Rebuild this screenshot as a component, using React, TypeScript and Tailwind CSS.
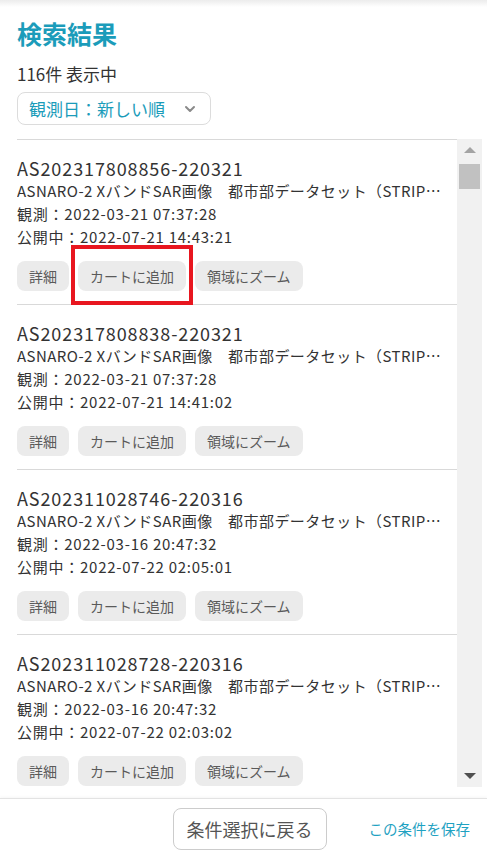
import React from 'react'
import { ChevronDown } from 'lucide-react'

type Scene = {
  id: string
  product: string
  observedAt: string
  publishedAt: string
}

const scenes: Scene[] = [
  {
    id: 'AS202317808856-220321',
    product: 'ASNARO-2 XバンドSAR画像　都市部データセット（STRIPMAP）',
    observedAt: '2022-03-21 07:37:28',
    publishedAt: '2022-07-21 14:43:21',
  },
  {
    id: 'AS202317808838-220321',
    product: 'ASNARO-2 XバンドSAR画像　都市部データセット（STRIPMAP）',
    observedAt: '2022-03-21 07:37:28',
    publishedAt: '2022-07-21 14:41:02',
  },
  {
    id: 'AS202311028746-220316',
    product: 'ASNARO-2 XバンドSAR画像　都市部データセット（STRIPMAP）',
    observedAt: '2022-03-16 20:47:32',
    publishedAt: '2022-07-22 02:05:01',
  },
  {
    id: 'AS202311028728-220316',
    product: 'ASNARO-2 XバンドSAR画像　都市部データセット（STRIPMAP）',
    observedAt: '2022-03-16 20:47:32',
    publishedAt: '2022-07-22 02:03:02',
  },
]

const FONT = { fontFamily: '"Noto Sans CJK JP", "Noto Sans", sans-serif' }

function ChipButton({ children, marked }: { children: React.ReactNode; marked?: boolean }) {
  return (
    <div className="relative">
      <button
        type="button"
        className="h-[30px] px-3 rounded-lg bg-[#ebebeb] text-[14px] text-[#5a5a5a] leading-none"
      >
        {children}
      </button>
      {marked ? (
        <div className="absolute -left-[7px] -right-[7px] -top-[16px] -bottom-[14px] border-[4px] border-[#e8161f] pointer-events-none" />
      ) : null}
    </div>
  )
}

function SceneRow({ scene, first }: { scene: Scene; first: boolean }) {
  return (
    <div className="border-b border-[#d9d9d9] pt-[16px] pb-[13px] pr-[8px]">
      <div className="text-[18px] leading-[24px] tracking-[0.05em] text-[#333]">{scene.id}</div>
      <div className="text-[15px] leading-[22px] tracking-[0.03em] text-[#333] truncate">{scene.product}</div>
      <div className="text-[15px] leading-[23px] tracking-[0.05em] text-[#333]">観測：{scene.observedAt}</div>
      <div className="text-[15px] leading-[23px] tracking-[0.05em] text-[#333]">公開中：{scene.publishedAt}</div>
      <div className="mt-[13px] flex gap-[9px]">
        <ChipButton>詳細</ChipButton>
        <ChipButton marked={first}>カートに追加</ChipButton>
        <ChipButton>領域にズーム</ChipButton>
      </div>
    </div>
  )
}

function ScrollTrack() {
  return (
    <div className="w-[25px] mb-[11px] bg-[#f1f1f1] flex flex-col items-center">
      <div className="h-[22px] flex items-center justify-center">
        <div className="w-0 h-0 border-x-[6px] border-x-transparent border-b-[6px] border-b-[#a3a3a3]" />
      </div>
      <div className="w-[21px] h-[25px] bg-[#c1c1c1] mt-[3px]" />
      <div className="flex-1" />
      <div className="h-[22px] flex items-center justify-center">
        <div className="w-0 h-0 border-x-[6px] border-x-transparent border-t-[6px] border-t-[#505050]" />
      </div>
    </div>
  )
}

export default function App() {
  return (
    <div className="w-[487px] h-[852px] bg-white flex flex-col overflow-hidden" style={FONT}>
      <div className="h-[7px] shrink-0 bg-gradient-to-b from-[#ececec] to-white" />

      <div className="px-[17px] pt-[10px] shrink-0">
        <div className="text-[25px] leading-[32px] font-bold text-[#1b9cba]">検索結果</div>
        <div className="mt-[13px] text-[17px] leading-[24px] text-[#333]">116件 表示中</div>
        <button
          type="button"
          className="mt-[6px] w-[194px] h-[33px] rounded-lg border border-[#dcdcdc] flex items-center justify-between pl-[11px] pr-[12px]"
        >
          <span className="text-[17px] text-[#1b9cba]">観測日：新しい順</span>
          <ChevronDown className="w-[16px] h-[16px] text-[#8a8a8a]" strokeWidth={3} />
        </button>
      </div>

      <div className="mt-[14px] flex-1 min-h-0 flex pr-[5px]">
        <div className="flex-1 min-w-0 ml-[17px] border-t border-[#d9d9d9] overflow-hidden">
          {scenes.map((s, i) => (
            <SceneRow key={s.id} scene={s} first={i === 0} />
          ))}
        </div>
        <ScrollTrack />
      </div>

      <div className="h-[54px] shrink-0 border-t border-[#e3e3e3] shadow-[0_-1px_3px_rgba(0,0,0,0.04)] flex items-start justify-end pr-[17px] pt-[9px] gap-[42px]">
        <button
          type="button"
          className="h-[42px] w-[154px] rounded-lg border border-[#cccccc] bg-white text-[18px] text-[#555]"
        >
          条件選択に戻る
        </button>
        <button type="button" className="h-[42px] text-[14.5px] text-[#1fa2c2]">
          この条件を保存
        </button>
      </div>
    </div>
  )
}
